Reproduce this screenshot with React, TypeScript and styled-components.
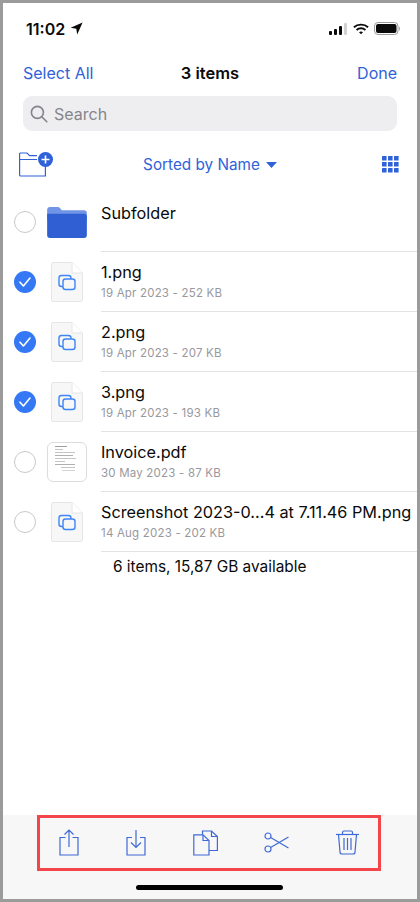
import React from "react";
import styled, { createGlobalStyle } from "styled-components";

const blue = "#2f62d9";

const GlobalStyle = createGlobalStyle`
  html, body {
    margin: 0;
    padding: 0;
    background: #9b9b9b;
  }
  * {
    box-sizing: border-box;
  }
`;

const Frame = styled.div`
  width: 420px;
  height: 902px;
  border: 3px solid #9b9b9b;
  background: #ffffff;
  display: flex;
  flex-direction: column;
  font-family: Inter, "Liberation Sans", sans-serif;
  color: #0a0a0a;
  overflow: hidden;
`;

const StatusBar = styled.div`
  height: 47px;
  padding: 4px 16px 0 23px;
  display: flex;
  align-items: center;
  justify-content: space-between;
`;

const Time = styled.div`
  display: flex;
  align-items: center;
  gap: 5px;
  font-size: 16px;
  font-weight: 600;
`;

const StatusIcons = styled.div`
  display: flex;
  align-items: center;
  gap: 5px;
`;

const NavBar = styled.div`
  height: 46px;
  padding: 0 20px;
  display: grid;
  grid-template-columns: 1fr auto 1fr;
  align-items: center;
`;

const NavButton = styled.span<{ $end?: boolean }>`
  font-size: 16px;
  color: ${blue};
  justify-self: ${(p) => (p.$end ? "end" : "start")};
`;

const NavTitle = styled.span`
  font-size: 16.5px;
  font-weight: 600;
`;

const SearchBox = styled.div`
  height: 35px;
  margin: 0 20px;
  padding: 0 7px;
  border-radius: 9px;
  background: #eeeef0;
  display: flex;
  align-items: center;
  gap: 6px;
  font-size: 16px;
  color: #85858a;
`;

const SortBar = styled.div`
  height: 49px;
  margin-top: 9px;
  padding: 0 18px 0 16px;
  display: grid;
  grid-template-columns: 1fr auto 1fr;
  align-items: center;
`;

const SortLabel = styled.div`
  display: flex;
  align-items: center;
  gap: 6px;
  margin-left: 2px;
  font-size: 15.3px;
  color: ${blue};
`;

const GridSlot = styled.div`
  display: flex;
  justify-content: flex-end;
`;

const List = styled.div`
  flex: 1;
  margin-top: 3px;
  display: flex;
  flex-direction: column;
`;

const Row = styled.div`
  height: 60px;
  display: flex;
  align-items: center;
  flex-shrink: 0;
`;

const Radio = styled.div<{ $checked?: boolean }>`
  width: 22px;
  height: 22px;
  margin-left: 11px;
  border-radius: 50%;
  border: ${(p) => (p.$checked ? "none" : "1.5px solid #c9c9c9")};
  background: ${(p) => (p.$checked ? "#3478f6" : "#ffffff")};
  display: flex;
  align-items: center;
  justify-content: center;
  flex-shrink: 0;
`;

const Thumb = styled.div`
  width: 40px;
  margin-left: 11px;
  display: flex;
  justify-content: center;
  flex-shrink: 0;
`;

const RowBody = styled.div`
  flex: 1;
  height: 100%;
  margin-left: 14px;
  border-bottom: 1px solid #e3e3e5;
  display: flex;
  flex-direction: column;
  justify-content: center;
  gap: 5px;
  padding-bottom: 1px;
  min-width: 0;
`;

const FolderBody = styled(RowBody)`
  justify-content: flex-start;
  padding-top: 12px;
`;

const FileName = styled.div`
  font-size: 16.25px;
  line-height: 19px;
  white-space: nowrap;
`;

const FileMeta = styled.div`
  font-size: 11.5px;
  line-height: 13px;
  letter-spacing: 0.2px;
  color: #98989d;
`;

const Summary = styled.div`
  padding: 6px 0 0 110px;
  font-size: 15.4px;
  line-height: 18px;
`;

const InvoiceThumb = styled.div`
  width: 40px;
  height: 40px;
  border: 1px solid #dcdcdc;
  border-radius: 6px;
  padding: 3px 7px;
  display: flex;
  flex-direction: column;
  gap: 2px;
`;

const InvoiceLine = styled.div<{ $w: number; $shade?: string; $indent?: number }>`
  height: 1px;
  width: ${(p) => p.$w}px;
  margin-left: ${(p) => p.$indent || 0}px;
  background: ${(p) => p.$shade || "#c4c4c4"};
`;

const Toolbar = styled.div`
  height: 84px;
  background: #f7f7f7;
  display: flex;
  flex-direction: column;
  align-items: center;
`;

const ActionGroup = styled.div`
  width: 344px;
  height: 56px;
  margin-left: -2px;
  border: 3px solid #f4454a;
  padding: 0 19px 1px 19px;
  display: flex;
  align-items: center;
  justify-content: space-between;
`;

const HomeIndicator = styled.div`
  width: 147px;
  height: 5px;
  margin-top: 14px;
  margin-left: -1px;
  border-radius: 3px;
  background: #000000;
`;

const LocationIcon = () => (
  <svg width="13" height="13" viewBox="0 0 13 13">
    <path d="M12.6 .4 L0.6 5.8 L6.3 6.7 L7.2 12.6 Z" fill="#0a0a0a" />
  </svg>
);

const SignalIcon = () => (
  <svg width="19" height="12" viewBox="0 0 19 12">
    <rect x="0" y="8" width="3" height="4" rx="1" fill="#0a0a0a" />
    <rect x="5" y="6" width="3" height="6" rx="1" fill="#0a0a0a" />
    <rect x="10" y="3" width="3" height="9" rx="1" fill="#0a0a0a" />
    <rect x="15" y="0" width="3" height="12" rx="1" fill="#d2d2d2" />
  </svg>
);

const WifiIcon = () => (
  <svg width="16" height="12" viewBox="0 0 17 12" fill="none" stroke="#0a0a0a" strokeWidth="2">
    <path d="M1 4.2 C5 0.4 12 0.4 16 4.2" />
    <path d="M3.8 7 C6.4 4.6 10.6 4.6 13.2 7" />
    <path d="M8.5 11.6 L6.4 9.4 C7.6 8.4 9.4 8.4 10.6 9.4 Z" fill="#0a0a0a" stroke="none" />
  </svg>
);

const BatteryIcon = () => (
  <svg width="27" height="13" viewBox="0 0 27 13">
    <rect x=".5" y=".5" width="23.5" height="12" rx="3.5" fill="none" stroke="#9c9c9c" />
    <rect x="2" y="2" width="20.5" height="9" rx="2" fill="#0a0a0a" />
    <path d="M25 4.4 C26.2 4.8 26.2 8.2 25 8.6 Z" fill="#9c9c9c" />
  </svg>
);

const SearchIcon = () => (
  <svg width="18" height="18" viewBox="0 0 18 18" fill="none" stroke="#85858a" strokeWidth="1.6">
    <circle cx="7.4" cy="7.4" r="6" />
    <path d="M11.8 11.8 L16.8 16.8" strokeLinecap="round" />
  </svg>
);

const NewFolderIcon = () => (
  <svg width="34" height="25" viewBox="0 0 34 25">
    <path
      d="M.6 7.5 V2 a1 1 0 0 1 1-1 H8 l2.6 2.6 H18 M.6 7.5 H18 M.6 7.5 V23 a1 1 0 0 0 1 1 H26.4 V14"
      fill="none"
      stroke={blue}
      strokeWidth="1.2"
    />
    <circle cx="26.5" cy="7.5" r="7.5" fill={blue} />
    <path d="M26.5 3.5 V11.5 M22.5 7.5 H30.5" stroke="#ffffff" strokeWidth="1.6" />
  </svg>
);

const SortCaret = () => (
  <svg width="11" height="6" viewBox="0 0 11 6">
    <path d="M0 0 H11 L5.5 6 Z" fill={blue} />
  </svg>
);

const GridIcon = () => (
  <svg width="17" height="17" viewBox="0 0 17 17" fill={blue}>
    {[0, 6, 12].map((y) =>
      [0, 6, 12].map((x) => <rect key={`${x}-${y}`} x={x} y={y} width="4.6" height="4.6" rx=".5" />)
    )}
  </svg>
);

const CheckIcon = () => (
  <svg width="12" height="10" viewBox="0 0 12 10" fill="none" stroke="#ffffff" strokeWidth="1.6">
    <path d="M1 5.2 L4.4 9 L11 1" strokeLinecap="round" strokeLinejoin="round" />
  </svg>
);

const FolderIcon = () => (
  <svg width="40" height="31" viewBox="0 0 41 32">
    <path d="M0 3 a3 3 0 0 1 3-3 H11 a3 3 0 0 1 2.4 1.2 L15 3.4 H38 a3 3 0 0 1 3 3 V14 H0 Z" fill="#7095e6" />
    <path d="M0 7 H38 a3 3 0 0 1 3 3 V29 a3 3 0 0 1-3 3 H3 a3 3 0 0 1-3-3 Z" fill="#2f5fd3" />
  </svg>
);

const ImageFileIcon = () => (
  <svg width="32" height="40" viewBox="0 0 32 40">
    <path
      d="M2 .5 H21 L31.5 11 V38 a1.5 1.5 0 0 1-1.5 1.5 H2 A1.5 1.5 0 0 1 .5 38 V2 A1.5 1.5 0 0 1 2 .5 Z"
      fill="#f7f7f7"
      stroke="#e6e6e6"
    />
    <path d="M21 .5 V11 H31.5" fill="#ffffff" stroke="#e6e6e6" />
    <rect x="8" y="13.5" width="12" height="11" rx="2.5" fill="none" stroke="#3f86f5" strokeWidth="1.4" />
    <rect x="12" y="17" width="12" height="10.5" rx="2.5" fill="#f7f7f7" stroke="#3f86f5" strokeWidth="1.4" />
  </svg>
);

const InvoiceIcon = () => (
  <InvoiceThumb>
    <InvoiceLine $w={12} $shade="#a0a0a0" />
    <InvoiceLine $w={8} />
    <InvoiceLine $w={20} />
    <InvoiceLine $w={18} $shade="#b0b0b0" />
    <InvoiceLine $w={21} />
    <InvoiceLine $w={10} />
    <InvoiceLine $w={20} $shade="#b0b0b0" />
    <InvoiceLine $w={14} $indent={6} />
    <InvoiceLine $w={13} $indent={7} $shade="#d4d4d4" />
  </InvoiceThumb>
);

const ShareIcon = () => (
  <svg width="20" height="27" viewBox="0 0 20 27" fill="none" stroke="#3f69d6" strokeWidth="1.2">
    <path d="M6.5 8.5 H1 V26 H19 V8.5 H13.5" />
    <path d="M10 18 V1 M5.5 5.5 L10 1 L14.5 5.5" />
  </svg>
);

const SaveIcon = () => (
  <svg width="20" height="27" viewBox="0 0 20 27" fill="none" stroke="#3f69d6" strokeWidth="1.2">
    <path d="M6 8.5 H1 V26 H19 V8.5 H14" />
    <path d="M10 1 V18.5 M5 13.5 L10 18.5 L15 13.5" />
  </svg>
);

const CopyIcon = () => (
  <svg width="25" height="26" viewBox="0 0 25 26" fill="none" stroke="#3f69d6" strokeWidth="1.2">
    <path d="M9.5 4.5 V1 H18.5 L24.4 6.5 V20.5 H16" />
    <path d="M18.5 1 V6.5 H24.4" />
    <path d="M.8 4.8 H10 L16 10.5 V25 H.8 Z" fill="#f7f7f7" />
    <path d="M10 4.8 V10.5 H16" />
  </svg>
);

const ScissorsIcon = () => (
  <svg width="25" height="21" viewBox="0 0 25 21" fill="none" stroke="#3f69d6" strokeWidth="1.2">
    <circle cx="4" cy="4" r="3" />
    <circle cx="4" cy="17" r="3" />
    <path d="M6.6 5.6 L24.5 16 M6.6 15.4 L24.5 5" />
  </svg>
);

const TrashIcon = () => (
  <svg width="23" height="25" viewBox="0 0 23 25" fill="none" stroke="#3f69d6" strokeWidth="1.2">
    <path d="M0 4.5 H23" />
    <path d="M6.5 4 V2.5 a1.5 1.5 0 0 1 1.5-1.5 H15 a1.5 1.5 0 0 1 1.5 1.5 V4" />
    <path d="M2.5 4.5 L4 22 a2 2 0 0 0 2 2 H17 a2 2 0 0 0 2-2 L20.5 4.5" />
    <path d="M8 8 V20 M11.5 8 V20 M15 8 V20" />
  </svg>
);

const files = [
  { name: "1.png", meta: "19 Apr 2023 - 252 KB", checked: true },
  { name: "2.png", meta: "19 Apr 2023 - 207 KB", checked: true },
  { name: "3.png", meta: "19 Apr 2023 - 193 KB", checked: true },
  { name: "Invoice.pdf", meta: "30 May 2023 - 87 KB", checked: false, invoice: true },
  { name: "Screenshot 2023-0...4 at 7.11.46 PM.png", meta: "14 Aug 2023 - 202 KB", checked: false },
];

export default function App() {
  return (
    <Frame>
      <GlobalStyle />
      <StatusBar>
        <Time>
          11:02
          <LocationIcon />
        </Time>
        <StatusIcons>
          <SignalIcon />
          <WifiIcon />
          <BatteryIcon />
        </StatusIcons>
      </StatusBar>
      <NavBar>
        <NavButton>Select All</NavButton>
        <NavTitle>3 items</NavTitle>
        <NavButton $end>Done</NavButton>
      </NavBar>
      <SearchBox>
        <SearchIcon />
        Search
      </SearchBox>
      <SortBar>
        <NewFolderIcon />
        <SortLabel>
          Sorted by Name
          <SortCaret />
        </SortLabel>
        <GridSlot>
          <GridIcon />
        </GridSlot>
      </SortBar>
      <List>
        <Row>
          <Radio />
          <Thumb>
            <FolderIcon />
          </Thumb>
          <FolderBody>
            <FileName>Subfolder</FileName>
          </FolderBody>
        </Row>
        {files.map((file) => (
          <Row key={file.name}>
            <Radio $checked={file.checked}>{file.checked && <CheckIcon />}</Radio>
            <Thumb>{file.invoice ? <InvoiceIcon /> : <ImageFileIcon />}</Thumb>
            <RowBody>
              <FileName>{file.name}</FileName>
              <FileMeta>{file.meta}</FileMeta>
            </RowBody>
          </Row>
        ))}
        <Summary>6 items, 15,87 GB available</Summary>
      </List>
      <Toolbar>
        <ActionGroup>
          <ShareIcon />
          <SaveIcon />
          <CopyIcon />
          <ScissorsIcon />
          <TrashIcon />
        </ActionGroup>
        <HomeIndicator />
      </Toolbar>
    </Frame>
  );
}
